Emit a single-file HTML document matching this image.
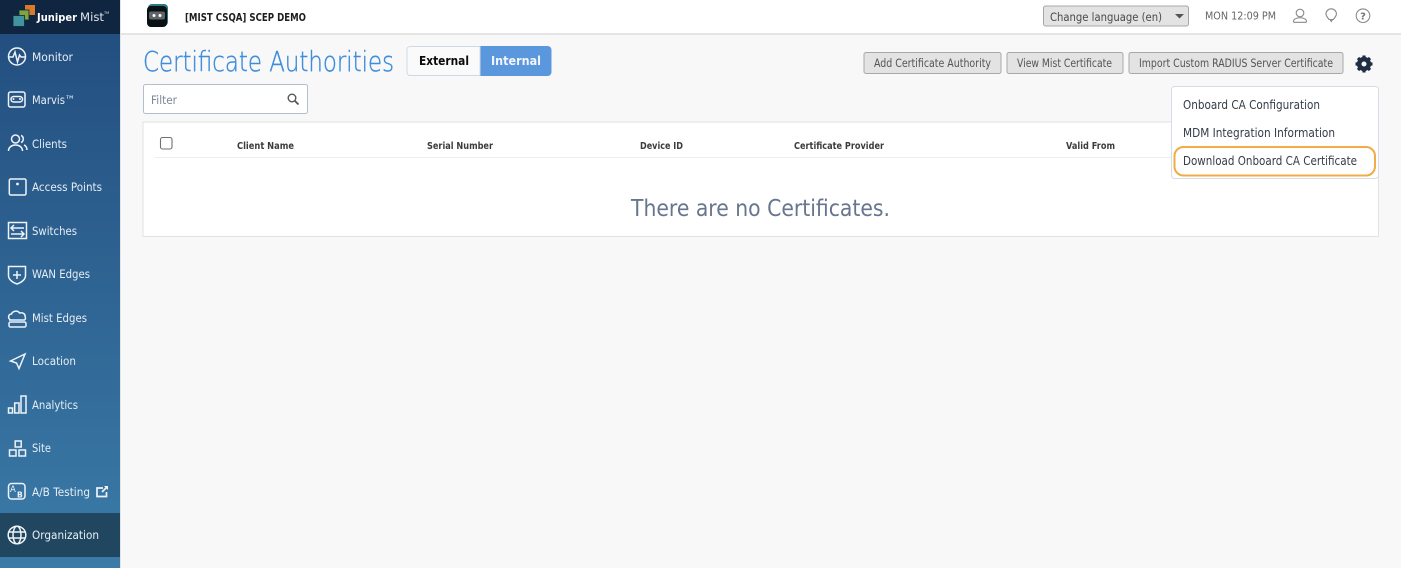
<!DOCTYPE html>
<html><head><meta charset="utf-8"><title>Certificate Authorities</title>
<style>
html,body{margin:0;padding:0;width:1401px;height:568px;overflow:hidden;background:#f8f8f8}
svg{display:block}
text{font-family:"DejaVu Sans","Liberation Sans",sans-serif}
.n{fill:#e6eef5;font-size:11.6px}
.h{fill:#3c3c3c;font-size:10px;font-weight:bold}
.b{fill:#555;font-size:11.2px}
.m{fill:#333c48;font-size:12.2px}
.i{fill:none;stroke:#eef3f7;stroke-width:1.5}
.g{fill:none;stroke:#8a8a8a;stroke-width:1.1}
</style></head><body>
<svg width="1401" height="568" viewBox="0 0 1401 568" xmlns="http://www.w3.org/2000/svg">
<defs><linearGradient id="s" x1="0" y1="0" x2="0" y2="1"><stop offset="0" stop-color="#234f80"/><stop offset="1" stop-color="#3b7ba8"/></linearGradient></defs>
<rect width="1401" height="568" fill="#f8f8f8"/>
<!-- header -->
<rect x="120" width="1281" height="33" fill="#fff"/>
<rect x="120" y="33" width="1281" height="2" fill="#e4e4e4"/>
<!-- sidebar -->
<rect x="0" y="34" width="120" height="534" fill="url(#s)"/>
<rect x="120" y="0" width="1" height="568" fill="#dfe5ea"/>
<rect x="0" y="0" width="120" height="34" fill="#0f2540"/>
<rect x="0" y="513" width="120" height="44" fill="#20475f"/>
<!-- logo -->
<rect x="25" y="5" width="10" height="10" fill="#d97a2b"/>
<rect x="19" y="10" width="10" height="10" fill="#7fa63e" stroke="#0f2540" stroke-width=".8"/>
<rect x="13" y="15.500" width="11.500" height="11" fill="#41939f" stroke="#0f2540" stroke-width=".8"/>
<text x="37" y="21" fill="#fff" font-size="11" font-weight="bold" textLength="40" lengthAdjust="spacingAndGlyphs">Juniper</text>
<text x="80" y="21" fill="#dfe6ec" font-size="11.500" textLength="24" lengthAdjust="spacingAndGlyphs">Mist</text>
<text x="104" y="14" fill="#dfe6ec" font-size="3.500">TM</text>
<!-- nav labels -->
<text class="n" x="32" y="61" textLength="41" lengthAdjust="spacingAndGlyphs">Monitor</text>
<text class="n" x="32" y="104" textLength="43" lengthAdjust="spacingAndGlyphs">Marvis™</text>
<text class="n" x="32" y="148" textLength="35" lengthAdjust="spacingAndGlyphs">Clients</text>
<text class="n" x="32" y="191" textLength="70" lengthAdjust="spacingAndGlyphs">Access Points</text>
<text class="n" x="32" y="235" textLength="45" lengthAdjust="spacingAndGlyphs">Switches</text>
<text class="n" x="32" y="278" textLength="58" lengthAdjust="spacingAndGlyphs">WAN Edges</text>
<text class="n" x="32" y="322" textLength="55" lengthAdjust="spacingAndGlyphs">Mist Edges</text>
<text class="n" x="32" y="365" textLength="44" lengthAdjust="spacingAndGlyphs">Location</text>
<text class="n" x="32" y="409" textLength="46" lengthAdjust="spacingAndGlyphs">Analytics</text>
<text class="n" x="32" y="452" textLength="19" lengthAdjust="spacingAndGlyphs">Site</text>
<text class="n" x="32" y="496" textLength="58" lengthAdjust="spacingAndGlyphs">A/B Testing</text>
<text class="n" x="32" y="539" textLength="67" lengthAdjust="spacingAndGlyphs">Organization</text>
<!-- nav icons -->
<g class="i">
<circle cx="17" cy="56.500" r="8.500"/><path d="M9 57h4l2-5 2.500 10 2-7 1.500 2h4"/>
<rect x="8.500" y="92" width="16.500" height="15" rx="2"/><rect x="11" y="96.500" width="11.500" height="5.500" rx="2.750"/>
<circle cx="15.500" cy="139" r="4"/><path d="M8.500 151c0-8 14-8 14 0M21 135.500c3 1 3 6 0 7M24 145c2 .7 3 3 3 5"/>
<rect x="9.300" y="179" width="16.700" height="16" rx="1.500"/>
<rect x="8.500" y="222.500" width="18" height="16"/><path d="M11 228h13M14 225l-3 3 3 3M11 234h13M21 231l3 3-3 3"/>
<path d="M8.500 266.500h17v9c0 4-4 7-8.500 8.500-4.500-1.500-8.500-4.500-8.500-8.500z"/><path d="M17 271v8M13 275h8"/>
<path d="M11 320c-3.500-1-3-6 .5-6 1-3 6-4 8-1 3-1 6 1 5.500 3.500 1 1 .5 3.500-1 3.500M9 320h16"/><rect x="9" y="322" width="17" height="5" rx="1.500"/>
<path d="M10.500 361L25 354l-6 14.500-2.500-5.500z"/>
<rect x="8.500" y="408" width="4" height="5"/><rect x="14.700" y="403" width="4.300" height="10"/><rect x="21" y="396" width="5" height="17"/>
<rect x="15.200" y="441" width="6" height="6"/><rect x="9.500" y="450" width="6.500" height="6"/><rect x="19" y="450" width="6.500" height="6"/>
<rect x="8.500" y="483.500" width="16.500" height="15.500" rx="3"/>
<circle cx="17" cy="535" r="8.800"/><ellipse cx="17" cy="535" rx="4" ry="8.800"/><path d="M8.500 532h17M8.500 538h17"/>
<path d="M103 488h-6v8.500h9.500v-4.500M102 492l5-5" stroke-width="1.700"/>
</g>
<circle cx="17.500" cy="184" r="1.400" fill="#eef3f7"/>
<circle cx="13.500" cy="99" r="1" fill="#eef3f7"/><circle cx="20" cy="99" r="1" fill="#eef3f7"/>
<path d="M104 486h4v4z" fill="#eef3f7"/>
<text x="10" y="492" fill="#eef3f7" font-size="8.500">A</text>
<text x="17" y="497.500" fill="#eef3f7" font-size="7.500" font-weight="bold">B</text>
<!-- bot logo -->
<rect x="148" y="4" width="20" height="22" rx="4" fill="#2a7a80"/>
<rect x="147" y="6" width="20" height="21" rx="4" fill="#0a1114"/>
<rect x="149" y="11.500" width="16" height="8" rx="2" fill="#5f6468"/>
<circle cx="154" cy="15.500" r="1.500" fill="#fff"/><circle cx="160" cy="15.500" r="1.500" fill="#fff"/>
<text x="185" y="21" fill="#1d1d1d" font-size="10.300" font-weight="bold" textLength="121" lengthAdjust="spacingAndGlyphs">[MIST CSQA] SCEP DEMO</text>
<!-- language select -->
<rect x="1043.500" y="6" width="145" height="20" rx="2" fill="#e3e3e3" stroke="#a8a8a8"/>
<text x="1050" y="21" fill="#4a4a4a" font-size="11.800" textLength="112" lengthAdjust="spacingAndGlyphs">Change language (en)</text>
<path d="M1175 14h9l-4.500 4.500z" fill="#555"/>
<text x="1205" y="19.500" fill="#666" font-size="10.300" textLength="71" lengthAdjust="spacingAndGlyphs">MON 12:09 PM</text>
<!-- header icons -->
<g class="g">
<circle cx="1300" cy="13" r="3.800"/><path d="M1293.500 21.500c0-5 13-5 13 0c0 .6-.4 .8-1 .8h-11c-.6 0-1-.2-1-.8z"/>
<path d="M1329 19.500c-1-2-3-3-3-5.500a5.200 5.200 0 0 1 10.400 0c0 2.500-2 3.500-3 5.500z"/>
<circle cx="1363" cy="15.700" r="6.800"/>
</g>
<path d="M1329 19h4.500l-2.200 3.500z" fill="#8a8a8a"/>
<text x="1363" y="19.500" text-anchor="middle" fill="#777" font-size="10" font-weight="bold">?</text>
<!-- title -->
<text x="143" y="71" fill="#3f8ddc" stroke="#3f8ddc" stroke-width=".4" font-size="27.500" font-weight="200" textLength="251" lengthAdjust="spacingAndGlyphs">Certificate Authorities</text>
<!-- toggle -->
<path d="M480 46.500h-70a3 3 0 0 0-3 3v23a3 3 0 0 0 3 3h70z" fill="#fafafa" stroke="#cfd9e6"/>
<path d="M480.500 46h67a4 4 0 0 1 4 4v22a4 4 0 0 1-4 4h-67z" fill="#5b97dc"/>
<text x="419" y="65" fill="#0b0b0b" font-size="12.500" font-weight="bold" textLength="50" lengthAdjust="spacingAndGlyphs">External</text>
<text x="491" y="65" fill="#f2f6fb" font-size="12.500" font-weight="bold" textLength="50" lengthAdjust="spacingAndGlyphs">Internal</text>
<!-- buttons -->
<rect x="864" y="52.500" width="137" height="21" rx="2" fill="#e3e3e3" stroke="#a8a8a8"/>
<rect x="1007" y="52.500" width="116" height="21" rx="2" fill="#e3e3e3" stroke="#a8a8a8"/>
<rect x="1129" y="52.500" width="214" height="21" rx="2" fill="#e3e3e3" stroke="#a8a8a8"/>
<text class="b" x="874" y="67" textLength="117" lengthAdjust="spacingAndGlyphs">Add Certificate Authority</text>
<text class="b" x="1017" y="67" textLength="95" lengthAdjust="spacingAndGlyphs">View Mist Certificate</text>
<text class="b" x="1139" y="67" textLength="194" lengthAdjust="spacingAndGlyphs">Import Custom RADIUS Server Certificate</text>
<!-- gear -->
<circle cx="1364" cy="64" r="4.800" fill="none" stroke="#1f2e42" stroke-width="4.600"/>
<g stroke="#1f2e42" stroke-width="3.200">
<path d="M1364 55.500v3M1364 69.500v3M1355.500 64h3M1369.500 64h3M1358 58l2.100 2.100M1367.900 67.900l2.100 2.100M1358 70l2.100-2.100M1367.900 60.100l2.100-2.100"/>
</g>
<!-- filter -->
<rect x="143.500" y="84.500" width="164" height="29" rx="2" fill="#fff" stroke="#b3bdcb"/>
<text x="151" y="104" fill="#7b8797" font-size="11.800" textLength="26" lengthAdjust="spacingAndGlyphs">Filter</text>
<circle cx="292" cy="98" r="3.800" fill="none" stroke="#555" stroke-width="1.400"/>
<path d="M295 101l3.500 3.500" stroke="#555" stroke-width="1.800"/>
<!-- table -->
<rect x="143" y="122" width="1235.500" height="114.500" fill="#fff" stroke="#e2e2e2"/>
<rect x="155" y="157" width="1223" height="1" fill="#eeeeee"/>
<rect x="160.500" y="137.500" width="11.500" height="11.500" rx="2" fill="#fff" stroke="#6f6f6f" stroke-width="1.100"/>
<text class="h" x="237" y="149" textLength="57" lengthAdjust="spacingAndGlyphs">Client Name</text>
<text class="h" x="427" y="149" textLength="66" lengthAdjust="spacingAndGlyphs">Serial Number</text>
<text class="h" x="640" y="149" textLength="43" lengthAdjust="spacingAndGlyphs">Device ID</text>
<text class="h" x="794" y="149" textLength="90" lengthAdjust="spacingAndGlyphs">Certificate Provider</text>
<text class="h" x="1066" y="149" textLength="49" lengthAdjust="spacingAndGlyphs">Valid From</text>
<text x="631" y="216" fill="#67768e" font-size="23" textLength="259" lengthAdjust="spacingAndGlyphs">There are no Certificates.</text>
<!-- dropdown -->
<rect x="1171.500" y="86.500" width="207" height="92" rx="3" fill="#fff" stroke="#d5dde7"/>
<text class="m" x="1183" y="109" textLength="137" lengthAdjust="spacingAndGlyphs">Onboard CA Configuration</text>
<text class="m" x="1183" y="137" textLength="152" lengthAdjust="spacingAndGlyphs">MDM Integration Information</text>
<text class="m" x="1183" y="165" textLength="174" lengthAdjust="spacingAndGlyphs">Download Onboard CA Certificate</text>
<rect x="1174.500" y="147" width="200.500" height="28.500" rx="9" fill="none" stroke="#f1ac47" stroke-width="2"/>
</svg>
</body></html>
